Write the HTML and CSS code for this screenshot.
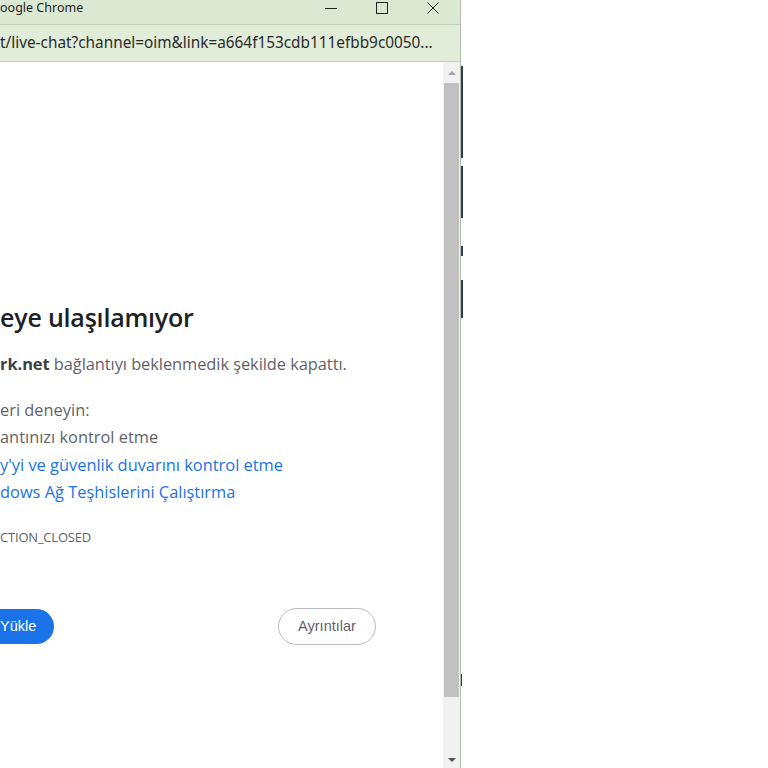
FILE: index.html
```html
<!DOCTYPE html>
<html lang="tr">
<head>
  <meta charset="UTF-8" />
  <meta name="viewport" content="width=device-width, initial-scale=1.0" />
  <title>Bu siteye ulaşılamıyor</title>
  <link rel="stylesheet" href="styles.css">
</head>
<body>
  <div class="desktop">
    <div class="window">
      <div class="titlebar">
        <span class="title">oogle Chrome</span>
        <div class="controls">
          <span class="ctl">
            <svg width="14" height="14" viewBox="0 0 14 14"><path d="M1 7.5h12" stroke="#222" stroke-width="1"/></svg>
          </span>
          <span class="ctl">
            <svg width="14" height="14" viewBox="0 0 14 14"><rect x="1.5" y="1.5" width="11" height="11" fill="none" stroke="#222" stroke-width="1"/></svg>
          </span>
          <span class="ctl">
            <svg width="14" height="14" viewBox="0 0 14 14"><path d="M1.5 1.5l11 11M12.5 1.5l-11 11" stroke="#222" stroke-width="1"/></svg>
          </span>
        </div>
      </div>
      <div class="urlbar">t/live-chat?channel=oim&amp;link=a664f153cdb111efbb9c0050...</div>
      <div class="page">
        <div class="content">
          <h1 class="heading">eye ulaşılamıyor</h1>
          <p class="summary"><strong>rk.net</strong> bağlantıyı beklenmedik şekilde kapattı.</p>
          <div class="suggestions">
            <div>eri deneyin:</div>
            <div>antınızı kontrol etme</div>
            <div class="link">y'yi ve güvenlik duvarını kontrol etme</div>
            <div class="link">dows Ağ Teşhislerini Çalıştırma</div>
          </div>
          <div class="error-code">CTION_CLOSED</div>
          <div class="buttons">
            <button class="btn-reload">Yükle</button>
            <button class="btn-details">Ayrıntılar</button>
          </div>
        </div>
        <div class="scrollbar">
          <div class="arrow up"></div>
          <div class="thumb"></div>
          <div class="track"></div>
          <div class="arrow down"></div>
        </div>
      </div>
    </div>
    <div class="behind">
      <div class="seg s1"></div>
      <div class="seg s2"></div>
      <div class="seg s3"></div>
      <div class="seg s4"></div>
      <div class="seg s5"></div>
    </div>
  </div>
</body>
</html>
```
FILE: styles.css
```css
html, body {
  margin: 0;
  padding: 0;
  background: #fff;
}
body {
  font-family: 'Open Sans', 'Noto Sans', sans-serif;
  width: 768px;
  height: 768px;
  overflow: hidden;
}
.desktop {
  display: flex;
  height: 768px;
}
.window {
  width: 460px;
  height: 768px;
  display: flex;
  flex-direction: column;
  border-right: 1px solid #b3bfae;
}
.titlebar {
  height: 25px;
  background: #dbe8d2;
  border-bottom: 1px solid #c5d2bd;
  display: flex;
  align-items: flex-start;
  justify-content: space-between;
  box-sizing: border-box;
}
.title {
  font-family: 'Noto Sans', sans-serif;
  font-size: 12.5px;
  color: #1e1e1e;
  line-height: 16px;
}
.controls {
  display: flex;
  margin-right: 20px;
}
.ctl {
  display: flex;
  width: 14px;
  height: 14px;
  margin-top: 1px;
  margin-left: 37px;
}
.urlbar {
  height: 37px;
  background: #e1ecd9;
  border-bottom: 1px solid #c3ceba;
  box-sizing: border-box;
  font-family: 'Noto Sans', sans-serif;
  font-size: 15.35px;
  color: #2b2b2b;
  line-height: 35px;
  white-space: nowrap;
  overflow: hidden;
}
.page {
  flex: 1;
  display: flex;
  min-height: 0;
}
.content {
  flex: 1;
  padding-top: 239px;
  color: #5f6368;
  font-size: 16.4px;
}
.heading {
  margin: 0;
  font-size: 25px;
  line-height: 32px;
  font-weight: 600;
  color: #202124;
  letter-spacing: -0.2px;
}
.summary {
  margin: 21px 0 0;
  line-height: 20px;
  letter-spacing: -0.05px;
}
.summary strong {
  color: #3c4043;
  font-weight: 700;
}
.suggestions {
  margin-top: 22px;
  line-height: 27.4px;
}
.link {
  color: #1a73e8;
}
.error-code {
  margin-top: 21px;
  font-size: 13px;
  line-height: 20px;
  letter-spacing: -0.2px;
}
.buttons {
  margin-top: 61px;
  display: flex;
  justify-content: space-between;
  align-items: center;
  padding-right: 67px;
}
.btn-reload {
  margin-left: -22px;
  height: 35px;
  padding: 0 18px 0 22px;
  border: none;
  border-radius: 18px;
  background: #1a73e8;
  color: #fff;
  font-family: 'Liberation Sans', Arial, sans-serif;
  font-size: 14.5px;
}
.btn-details {
  height: 37px;
  width: 98px;
  border: 1px solid #b9bcc0;
  border-radius: 19px;
  background: #fff;
  color: #5f6368;
  font-family: 'Liberation Sans', Arial, sans-serif;
  font-size: 14.5px;
  padding: 0;
}
.scrollbar {
  width: 17px;
  display: flex;
  flex-direction: column;
  align-items: center;
  background: #f1f1f1;
}
.arrow {
  width: 0;
  height: 0;
  border-left: 4px solid transparent;
  border-right: 4px solid transparent;
}
.arrow.up {
  border-bottom: 4px solid #a3a3a3;
  margin: 9px 0 8px;
}
.arrow.down {
  border-top: 4px solid #505050;
  margin: 0 0 6px;
}
.thumb {
  width: 15px;
  height: 614px;
  background: #c1c1c1;
}
.track {
  flex: 1;
}
.behind {
  width: 2px;
  display: flex;
  flex-direction: column;
}
.seg {
  background: #2e3c56;
}
.s1 { margin-top: 66px; height: 92px; }
.s2 { margin-top: 8px; height: 52px; }
.s3 { margin-top: 28px; height: 10px; }
.s4 { margin-top: 24px; height: 38px; }
.s5 { margin-top: 356px; height: 12px; width: 1px; }
```
